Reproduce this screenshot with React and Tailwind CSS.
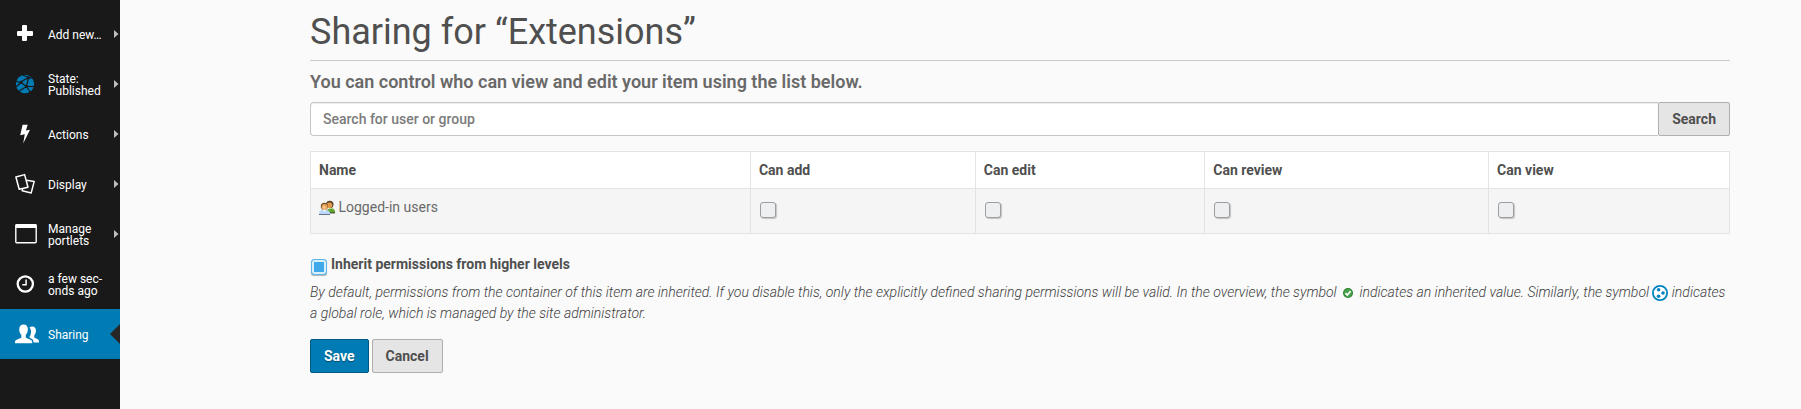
import { useState } from "react";

function PlusIcon() {
  return (
    <svg width="22" height="22" viewBox="0 0 22 22" fill="#fff">
      <rect x="8" y="2" width="5" height="16" rx="1" />
      <rect x="3" y="8" width="16" height="5" rx="1" />
    </svg>
  );
}

function StateIcon() {
  return (
    <svg width="22" height="22" viewBox="0 0 22 22" fill="none">
      <circle cx="11" cy="11" r="9.2" fill="#007bb3" />
      <g stroke="#191919" strokeWidth="1.2">
        <path d="M1.5 8 6.5 9.5" />
        <path d="M7.5 8.5 14.5 4.5 20 5.5" />
        <path d="M7.5 1.5 14.5 4.5" />
        <path d="M7 9.5 12.5 13.5 4.5 18.5" />
        <path d="M12.5 13.5 21 13.5" />
        <path d="M14.5 4.5 12.5 13.5 16.5 19.5" />
        <path d="M7 9.5 2 14" />
      </g>
      <g fill="#191919">
        <circle cx="7" cy="9.3" r="1.5" />
        <circle cx="14.5" cy="4.8" r="1.6" />
        <circle cx="12.6" cy="13.4" r="1.3" />
      </g>
    </svg>
  );
}

function BoltIcon() {
  return (
    <svg width="22" height="22" viewBox="0 0 22 22" fill="#fff">
      <path d="M8.6 1.8 13.7 1.8 11.9 7.4 16 6.8 9.2 20.4 10.8 11.3 6.2 12.2Z" />
    </svg>
  );
}

function DisplayIcon() {
  return (
    <svg width="22" height="22" viewBox="0 0 22 22" fill="none" stroke="#fff" strokeWidth="1.5" strokeLinejoin="round">
      <path d="M1.9 4 10.6 1.6 14 14.2 5.2 16.3Z" />
      <path d="M12.6 7.2 20.2 8.4 17.2 19.9 8.2 17.8 8.5 16" />
    </svg>
  );
}

function WindowIcon() {
  return (
    <svg width="24" height="22" viewBox="0 0 24 22" fill="none">
      <rect x="1.8" y="1.8" width="20.4" height="18" rx="1" stroke="#fff" strokeWidth="1.4" />
      <rect x="1.5" y="1" width="21" height="4" rx="1" fill="#fff" />
    </svg>
  );
}

function ClockIcon() {
  return (
    <svg width="22" height="22" viewBox="0 0 22 22" fill="none" stroke="#fff">
      <circle cx="11.3" cy="11" r="7.6" strokeWidth="2.3" />
      <path d="M12.1 6.5V11.7H8.3" strokeWidth="1.5" />
    </svg>
  );
}

function UsersIcon() {
  return (
    <svg width="26" height="22" viewBox="-1 0 26 22" fill="#fff">
      <path d="M14.5 4.6C15.2 3.8 16.2 3.4 17.3 3.4 19.6 3.4 21 5.1 21 7.6 21 9.4 20.3 11 19.3 12.2V14.6L22.3 16C23.5 16.6 24 17.4 24 18.6V19.6H18.5C18.5 16.9 17.6 16 14.6 14.8V13.6C15.6 12.3 16 10.7 16 8.8 15.9 7 15.4 5.6 14.5 4.6Z" />
      <path d="M8.5 1.4C11.3 1.4 12.9 3.4 12.9 6.3 12.9 8.5 12 10.6 10.8 11.8V14.8L15 16.4C16.5 17 17.2 17.8 17.2 19.2V20.2H0V19.2C0 17.8.6 17 2.2 16.4L6.3 14.8V11.8C5 10.6 4.2 8.5 4.2 6.3 4.2 3.4 5.8 1.4 8.5 1.4Z" />
    </svg>
  );
}

function GroupIcon() {
  return (
    <svg width="16" height="16" viewBox="0 0 16 16" className="inline-block align-[-4px]">
      <path d="M8 13V10L10.5 8.5H14L16 10.5V13Z" fill="#5fa82c" />
      <path d="M10 12.4H16V13.4H10Z" fill="#3e3a31" />
      <circle cx="10.8" cy="4.4" r="3.7" fill="#5b4527" />
      <circle cx="10.4" cy="5.2" r="2.8" fill="#e39a4c" />
      <path d="M0 14.6V12.4C.6 10.6 2.2 9.8 5 9.8S10.4 10.6 11 12.6V14.6Z" fill="#b9d8fa" />
      <path d="M0 14.2H11V15H0Z" fill="#4a5568" />
      <circle cx="5.4" cy="6.3" r="3.6" fill="#6b4f2c" />
      <circle cx="5.6" cy="7" r="3" fill="#eba458" />
      <circle cx="5.2" cy="7.2" r="1.5" fill="#f8c78e" />
      <path d="M4 9.8H7L5.6 12Z" fill="#fff" />
    </svg>
  );
}

function InheritedIcon() {
  return (
    <svg role="img" aria-label="inherited" width="16" height="16" viewBox="0 0 16 16" className="inline-block align-[-4px]">
      <circle cx="8" cy="8" r="5" fill="#2a7d31" />
      <circle cx="8" cy="8" r="4.2" fill="#43a047" />
      <path d="M5.4 8.2 7.3 10 10.6 6.1" fill="none" stroke="#fff" strokeWidth="1.7" />
    </svg>
  );
}

function GlobalIcon() {
  return (
    <svg role="img" aria-label="global" width="16" height="16" viewBox="0 0 16 16" className="inline-block align-[-4px]">
      <circle cx="8" cy="8" r="7.1" fill="#fff" stroke="#0083be" strokeWidth="1.8" />
      <g fill="#0083be">
        <circle cx="6.6" cy="4.8" r="1.8" />
        <circle cx="11" cy="8" r="1.8" />
        <circle cx="6.6" cy="11.2" r="1.8" />
      </g>
    </svg>
  );
}

const menu = [
  { label: "Add new…", icon: PlusIcon, arrow: true },
  { label: "State: Published", icon: StateIcon, arrow: true },
  { label: "Actions", icon: BoltIcon, arrow: true },
  { label: "Display", icon: DisplayIcon, arrow: true },
  { label: "Manage portlets", icon: WindowIcon, arrow: true },
  { label: "a few sec\u00adonds ago", icon: ClockIcon },
  { label: "Sharing", icon: UsersIcon, active: true },
];

function Toolbar() {
  return (
    <nav aria-label="Toolbar" className="w-[120px] shrink-0 bg-[#191919] pt-[9px] text-xs leading-3 text-white">
      <ul>
        {menu.map(({ label, icon: Icon, arrow, active }) => (
          <li key={label}>
            <a
              href="#"
              aria-current={active ? "page" : undefined}
              className={
                active
                  ? "flex h-[50px] items-center bg-[#007bb3] pl-3.5"
                  : "flex h-[50px] items-center pl-3.5"
              }
            >
              <span className="flex w-[34px] shrink-0">
                <Icon />
              </span>
              <span className="w-14 shrink-0 pt-0.5">{label}</span>
              {arrow && (
                <svg width="5" height="8" viewBox="0 0 5 8" className="mr-px ml-auto shrink-0" fill="#bdbdbd">
                  <path d="M0 0 4.5 4 0 8Z" />
                </svg>
              )}
              {active && (
                <svg width="10" height="20" viewBox="0 0 10 20" className="ml-auto shrink-0" fill="#262626">
                  <path d="M10 0V20L0 10Z" />
                </svg>
              )}
            </a>
          </li>
        ))}
      </ul>
    </nav>
  );
}

const boxClass =
  "block size-4 appearance-none rounded-[3px] border border-[#9b9fa2] bg-[#eeeff1] shadow-[1px_1px_1px_rgba(0,0,0,0.2)] checked:border-[#5fb8ec] checked:bg-[#3fa9ea] checked:shadow-[inset_0_0_0_2px_#d9effc,0_1px_1px_rgba(0,0,0,0.3)]";

const columns = [
  { label: "Can add", width: "w-[15.85%]" },
  { label: "Can edit", width: "w-[16.17%]" },
  { label: "Can review", width: "w-[20%]" },
  { label: "Can view", width: "w-[16.98%]" },
];

export default function App() {
  const [inherit, setInherit] = useState(true);
  const cell = "border border-[#e3e3e3] px-2 text-left";
  const button = "h-[34px] rounded-[2px] border px-[13px] text-sm font-bold";
  return (
    <div className="flex min-h-screen bg-[#fafafa] font-[Roboto,sans-serif] text-sm leading-[21px] text-[#696969]">
      <Toolbar />
      <main className="min-w-0 flex-1 pl-[119px]">
        <div className="mx-auto max-w-[1420px]">
          <h1 className="border-b border-[#c9c9c9] pt-3 pb-2 text-4xl leading-10 text-[#4f4f4f]">
            Sharing for “Extensions”
          </h1>
          <p className="mt-2 text-lg leading-[26px] font-semibold">
            You can control who can view and edit your item using the list below.
          </p>
          <form onSubmit={(e) => e.preventDefault()}>
            <div className="mt-[7px] flex">
              <input
                type="text"
                aria-label="Search for user or group"
                placeholder="Search for user or group"
                className="h-[34px] min-w-0 flex-1 rounded-l border border-r-0 border-[#c6c6c6] bg-white px-3 font-medium shadow-[inset_0_1px_1px_rgba(0,0,0,0.075)] placeholder:text-[#7b7b7b]"
              />
              <button type="submit" className={button + " border-[#afafaf] bg-[#e5e5e5] text-[#4f4f4f]"}>
                Search
              </button>
            </div>
            <table className="mt-[15px] w-full table-fixed border-collapse">
              <thead className="bg-white text-[#4f4f4f]">
                <tr>
                  <th scope="col" className={cell + " h-[37px]"}>
                    Name
                  </th>
                  {columns.map((c) => (
                    <th key={c.label} scope="col" className={cell + " " + c.width}>
                      {c.label}
                    </th>
                  ))}
                </tr>
              </thead>
              <tbody className="bg-[#f5f5f5]">
                <tr>
                  <td className={cell + " h-[45px] pt-2 align-top"}>
                    <GroupIcon /> Logged-in users
                  </td>
                  {columns.map((c) => (
                    <td key={c.label} className={cell + " pb-0.5"}>
                      <input type="checkbox" aria-label={c.label + ": Logged-in users"} className={boxClass + " ml-px"} />
                    </td>
                  ))}
                </tr>
              </tbody>
            </table>
            <div className="mt-5 flex pl-px">
              <input
                id="inherit"
                type="checkbox"
                checked={inherit}
                onChange={(e) => setInherit(e.target.checked)}
                className={boxClass + " mt-[5px]"}
              />
              <label htmlFor="inherit" className="pl-1 font-bold text-[#4f4f4f]">
                Inherit permissions from higher levels
              </label>
            </div>
            <p className="mt-[7px] font-light text-[#404040] italic">
              By default, permissions from the container of this item are inherited. If you disable this, only the
              explicitly defined sharing permissions will be valid. In the overview, the symbol <InheritedIcon />{" "}
              indicates an inherited value. Similarly, the symbol <GlobalIcon /> indicates a global role, which is
              managed by the site administrator.
            </p>
            <div className="mt-[15px] flex gap-[3px]">
              <button
                type="submit"
                className={button + " border-[#00587f] bg-[#007bb3] text-white [text-shadow:0_1px_1px_rgba(0,0,0,0.4)]"}
              >
                Save
              </button>
              <button type="button" className={button + " border-[#afafaf] bg-[#e5e5e5] text-[#4f4f4f]"}>
                Cancel
              </button>
            </div>
          </form>
        </div>
      </main>
    </div>
  );
}
